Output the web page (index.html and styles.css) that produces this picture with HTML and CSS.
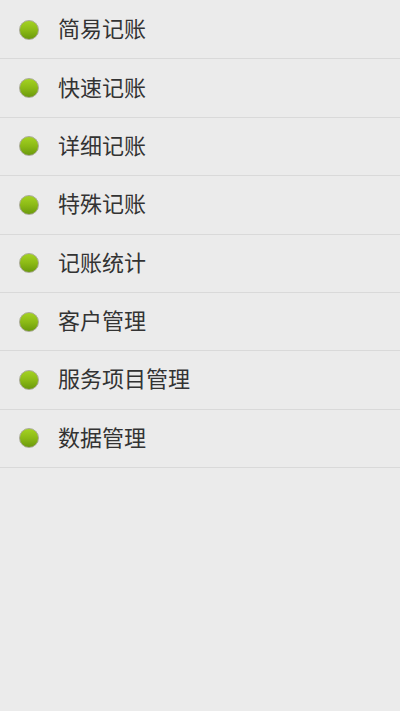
FILE: index.html
```html
<!DOCTYPE html>
<html lang="zh-CN">
<head>
<meta charset="utf-8">
<title>记账</title>
<link rel="stylesheet" href="styles.css">
</head>
<body>
<ul class="menu">
  <li class="item"><span class="dot"></span><span class="label">简易记账</span></li>
  <li class="item"><span class="dot"></span><span class="label">快速记账</span></li>
  <li class="item"><span class="dot"></span><span class="label">详细记账</span></li>
  <li class="item"><span class="dot"></span><span class="label">特殊记账</span></li>
  <li class="item"><span class="dot"></span><span class="label">记账统计</span></li>
  <li class="item"><span class="dot"></span><span class="label">客户管理</span></li>
  <li class="item"><span class="dot"></span><span class="label">服务项目管理</span></li>
  <li class="item"><span class="dot"></span><span class="label">数据管理</span></li>
</ul>
</body>
</html>
```

FILE: styles.css
```css
html, body {
  margin: 0;
  padding: 0;
  background: #ebebeb;
  height: 100%;
}
body {
  font-family: "Noto Sans CJK SC", "Noto Sans", sans-serif;
}
.menu {
  list-style: none;
  margin: 0;
  padding: 1px 0 0 0;
}
.item {
  display: flex;
  align-items: center;
  height: 57.375px;
  border-bottom: 1px solid #d9d9d9;
  padding-left: 19px;
}
.dot {
  width: 20px;
  height: 20px;
  border-radius: 50%;
  box-sizing: border-box;
  border: 1px solid #a9aa94;
  background: linear-gradient(to bottom, #a4d222 0%, #8cba16 50%, #6b9a0c 100%);
  flex: none;
}
.label {
  margin-left: 19px;
  padding-bottom: 5px;
  font-size: 22px;
  color: #333333;
  line-height: 1;
}
```
